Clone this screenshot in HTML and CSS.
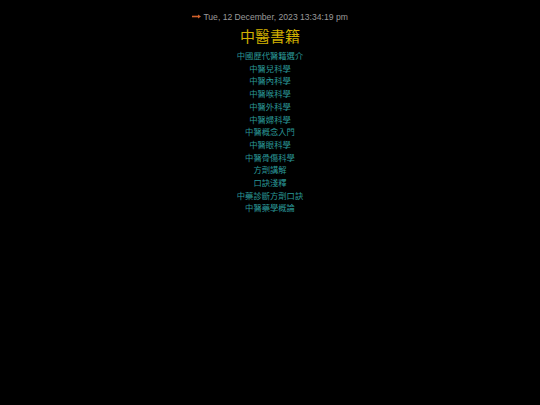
FILE: index.html
```html
<!DOCTYPE html>
<html lang="zh-Hant">
<head>
<meta charset="utf-8">
<title>中醫書籍</title>
<link rel="stylesheet" href="styles.css">
</head>
<body>
<div class="page">
  <div class="date"><svg class="arrow" width="9" height="5" viewBox="0 0 9 5"><path d="M0 2.5H7" stroke="#d0602a" stroke-width="1.6"/><path d="M6 0.5L9 2.5L6 4.5Z" fill="#d0602a"/></svg> Tue, 12 December, 2023 13:34:19 pm</div>
  <h1 class="title">中醫書籍</h1>
  <ul class="list">
    <li><a href="#">中國歷代醫籍選介</a></li>
    <li><a href="#">中醫兒科學</a></li>
    <li><a href="#">中醫內科學</a></li>
    <li><a href="#">中醫喉科學</a></li>
    <li><a href="#">中醫外科學</a></li>
    <li><a href="#">中醫婦科學</a></li>
    <li><a href="#">中醫概念入門</a></li>
    <li><a href="#">中醫眼科學</a></li>
    <li><a href="#">中醫骨傷科學</a></li>
    <li><a href="#">方劑講解</a></li>
    <li><a href="#">口訣淺釋</a></li>
    <li><a href="#">中藥診斷方劑口訣</a></li>
    <li><a href="#">中醫藥學概論</a></li>
  </ul>
</div>
</body>
</html>
```
FILE: styles.css
```css
html, body {
  margin: 0;
  padding: 0;
  background: #000;
}
.page {
  padding-top: 11px;
  text-align: center;
  font-family: "Liberation Sans", "Noto Sans CJK TC", sans-serif;
}
.date {
  font-size: 8.6px;
  line-height: 12px;
  color: #9a9a9a;
}
.arrow {
  vertical-align: 1px;
}
.title {
  margin: 3px 0 0;
  font-size: 15px;
  line-height: 20px;
  font-weight: normal;
  color: #d0b000;
  font-family: "Noto Sans CJK TC", sans-serif;
}
.list {
  list-style: none;
  margin: 3px 0 0;
  padding: 0;
  font-family: "Noto Sans CJK TC", sans-serif;
  font-size: 8.3px;
  line-height: 12.7px;
}
.list a {
  color: #2a9898;
  text-decoration: none;
}
```
